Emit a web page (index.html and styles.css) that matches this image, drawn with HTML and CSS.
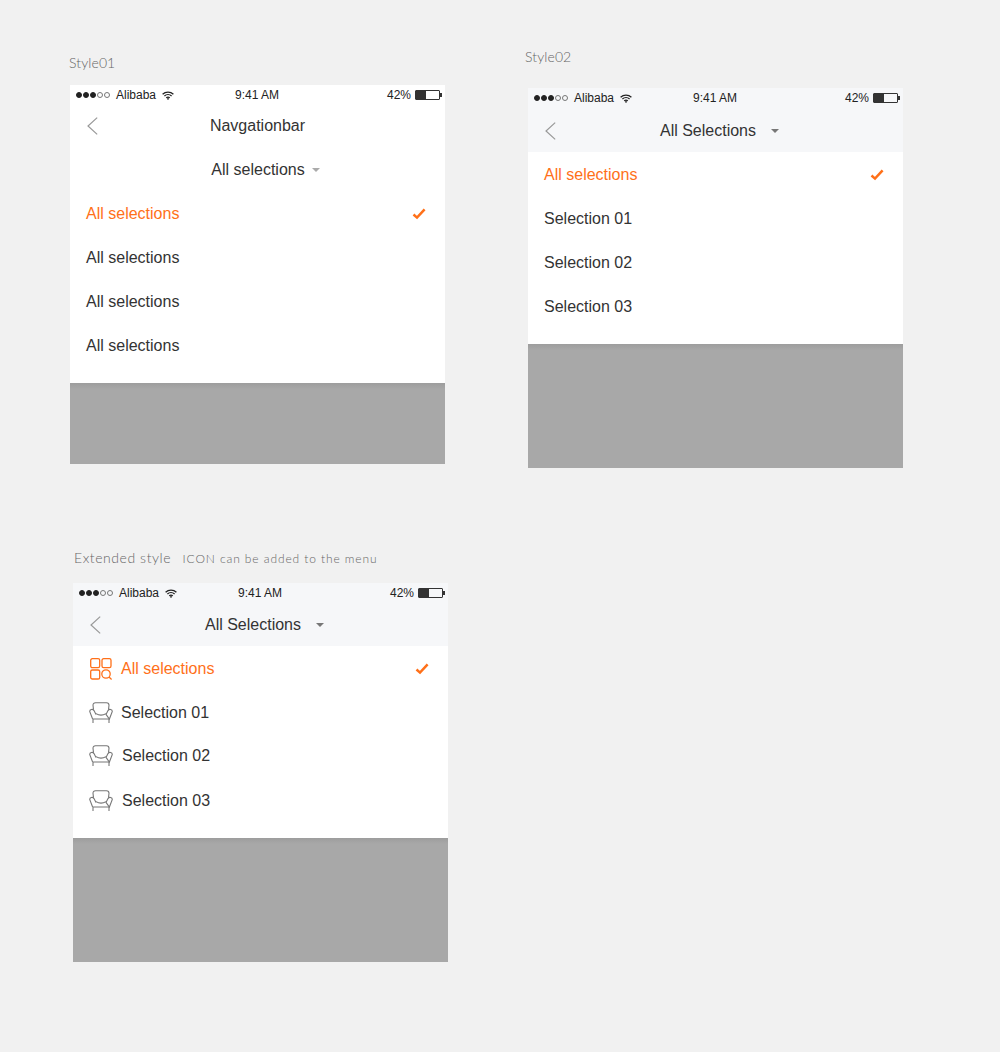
FILE: index.html
```html
<!DOCTYPE html>
<html lang="en">
<head>
    <meta charset="UTF-8">
    <meta name="viewport" content="width=device-width, initial-scale=1.0">
    <title>Dropdown menu styles</title>
    <link rel="stylesheet" href="styles.css">
</head>
<body>

    <!-- shared icons -->
    <svg class="defs" width="0" height="0">
        <symbol id="wifi" viewBox="0 0 12 9">
            <path d="M0.6 3.2C3.6 0.4 8.4 0.4 11.4 3.2M2.4 5C4.4 3.2 7.6 3.2 9.6 5M4.2 6.8C5.2 6 6.8 6 7.8 6.8" fill="none" stroke="#222" stroke-width="1.3"/>
            <path d="M6 9L4.8 7.7C5.5 7.2 6.5 7.2 7.2 7.7Z" fill="#222"/>
        </symbol>
        <symbol id="back" viewBox="0 0 11 18">
            <path d="M10.2 0.6L1 9L10.2 17.4" fill="none" stroke="#999" stroke-width="1.2"/>
        </symbol>
        <symbol id="check" viewBox="0 0 14 12">
            <path d="M1.5 6.5L5 9.6L12.6 1.4" fill="none" stroke="#ff7019" stroke-width="2.5"/>
        </symbol>
        <symbol id="grid" viewBox="0 0 22 22">
            <g fill="none" stroke="#ff7019" stroke-width="1.3">
                <rect x="0.7" y="0.7" width="9" height="9" rx="1.6"/>
                <rect x="12" y="0.7" width="9" height="9" rx="1.6"/>
                <rect x="0.7" y="12" width="9" height="9" rx="1.6"/>
                <circle cx="16" cy="16" r="4.2"/>
                <path d="M19 19L21.6 21.4"/>
            </g>
        </symbol>
        <symbol id="sofa" viewBox="0 0 24 22">
            <g fill="none" stroke="#777" stroke-width="1.1">
                <path d="M4.5 7.6L4 3.2C4 1.6 5 0.7 6.5 0.7H17.5C19 0.7 20 1.6 20 3.2L19.5 7.6"/>
                <path d="M7 11.6C10 13.4 14 13.4 17 11.6"/>
                <path d="M3.6 17L0.7 9.4C0.7 7.4 3.8 6.6 5 8.6L7 12.4M17 12.4L19 8.6C20.2 6.6 23.3 7.4 23.3 9.4L20.4 17Z"/>
                <path d="M3.6 17H20.4M4 17V21M20 17V21"/>
            </g>
        </symbol>
    </svg>

    <div class="top-row">
        <section class="board board-one">
            <h2 class="board-label">Style01</h2>
            <div class="screen">
                <div class="status-bar">
                    <div class="status-left">
                        <span class="signal"><i class="on"></i><i class="on"></i><i class="on"></i><i></i><i></i></span>
                        <span>Alibaba</span>
                        <svg class="wifi"><use href="#wifi"/></svg>
                    </div>
                    <span class="status-time">9:41 AM</span>
                    <div class="status-right">
                        <span>42%</span>
                        <span class="battery"><i></i></span>
                    </div>
                </div>
                <div class="nav">
                    <svg class="back"><use href="#back"/></svg>
                    <span class="nav-title">Navgationbar</span>
                </div>
                <div class="menu">
                    <div class="menu-row filter">All selections <span class="caret"></span></div>
                    <div class="menu-row active">All selections <svg class="check"><use href="#check"/></svg></div>
                    <div class="menu-row">All selections</div>
                    <div class="menu-row">All selections</div>
                    <div class="menu-row">All selections</div>
                </div>
                <div class="mask"></div>
            </div>
        </section>

        <section class="board board-two">
            <h2 class="board-label">Style02</h2>
            <div class="screen">
                <div class="head">
                    <div class="status-bar">
                        <div class="status-left">
                            <span class="signal"><i class="on"></i><i class="on"></i><i class="on"></i><i></i><i></i></span>
                            <span>Alibaba</span>
                            <svg class="wifi"><use href="#wifi"/></svg>
                        </div>
                        <span class="status-time">9:41 AM</span>
                        <div class="status-right">
                            <span>42%</span>
                            <span class="battery"><i></i></span>
                        </div>
                    </div>
                    <div class="nav">
                        <svg class="back"><use href="#back"/></svg>
                        <span class="nav-title with-caret">All Selections <span class="caret dark"></span></span>
                    </div>
                </div>
                <div class="menu">
                    <div class="menu-row active">All selections <svg class="check"><use href="#check"/></svg></div>
                    <div class="menu-row">Selection 01</div>
                    <div class="menu-row">Selection 02</div>
                    <div class="menu-row">Selection 03</div>
                </div>
                <div class="mask tall"></div>
            </div>
        </section>
    </div>

    <section class="board board-three">
        <h2 class="board-label">Extended style <small>ICON can be added to the menu</small></h2>
        <div class="screen">
            <div class="head">
                <div class="status-bar">
                    <div class="status-left">
                        <span class="signal"><i class="on"></i><i class="on"></i><i class="on"></i><i></i><i></i></span>
                        <span>Alibaba</span>
                        <svg class="wifi"><use href="#wifi"/></svg>
                    </div>
                    <span class="status-time">9:41 AM</span>
                    <div class="status-right">
                        <span>42%</span>
                        <span class="battery"><i></i></span>
                    </div>
                </div>
                <div class="nav">
                    <svg class="back"><use href="#back"/></svg>
                    <span class="nav-title with-caret">All Selections <span class="caret dark"></span></span>
                </div>
            </div>
            <div class="menu">
                <div class="menu-row active">
                    <span class="row-label"><svg class="row-icon"><use href="#grid"/></svg>All selections</span>
                    <svg class="check"><use href="#check"/></svg>
                </div>
                <div class="menu-row"><span class="row-label"><svg class="row-icon"><use href="#sofa"/></svg>Selection 01</span></div>
                <div class="menu-row short"><span class="row-label nudge"><svg class="row-icon"><use href="#sofa"/></svg>Selection 02</span></div>
                <div class="menu-row"><span class="row-label nudge"><svg class="row-icon"><use href="#sofa"/></svg>Selection 03</span></div>
            </div>
            <div class="mask tall"></div>
        </div>
    </section>

</body>
</html>
```
FILE: styles.css
```css
* {
    margin: 0;
    padding: 0;
    box-sizing: border-box;
}

body {
    width: 1000px;
    height: 1052px;
    overflow: hidden;
    background-color: #f1f1f1;
    font-family: "Liberation Sans", Arial, sans-serif;
    color: #333;
}

.defs {
    display: block;
    height: 0;
}

.top-row {
    display: flex;
    align-items: flex-start;
    padding-top: 48px;
}

.board-one {
    margin: 6px 0 0 69px;
}

.board-one .board-label {
    margin-bottom: 13px;
}

.board-one .screen {
    margin-left: 1px;
}

.board-one .nav {
    padding-bottom: 2px;
}

.board-one .menu {
    padding-bottom: 15px;
}

.board-two {
    margin-left: 80px;
}

.board-two .board-label {
    margin-bottom: 22px;
}

.board-two .screen {
    margin-left: 3px;
}

.board-two .nav {
    padding-top: 2px;
}

.board-two .menu,
.board-three .menu {
    padding-top: 1px;
    padding-bottom: 15px;
}

.board-three {
    margin: 81px 0 0 74px;
}

.board-three .board-label {
    margin-bottom: 16px;
    letter-spacing: 0.57px;
}

.board-three .screen {
    margin-left: -1px;
}

.board-three .head .nav {
    height: 43px;
}

.board-label {
    height: 18px;
    font-family: Lato, sans-serif;
    font-size: 14px;
    font-weight: 300;
    line-height: 18px;
    letter-spacing: 0.1px;
    color: #666;
}

.board-label small {
    margin-left: 7px;
    font-size: 12px;
    letter-spacing: 0.9px;
}

.screen {
    width: 375px;
    background-color: #fff;
}

.head {
    background-color: #f6f7f9;
}

/* status bar */
.status-bar {
    display: grid;
    grid-template-columns: 1fr auto 1fr;
    align-items: center;
    height: 20px;
    padding: 0 4px 0 6px;
    font-size: 12px;
    color: #222;
}

.status-left {
    display: flex;
    align-items: center;
}

.status-right {
    display: flex;
    align-items: center;
    justify-content: flex-end;
}

.status-time {
    margin-right: 3px;
}

.signal {
    display: flex;
    gap: 1px;
    margin-right: 6px;
}

.signal i {
    width: 6px;
    height: 6px;
    border: 1px solid #777;
    border-radius: 50%;
}

.signal i.on {
    background-color: #222;
    border-color: #222;
}

.wifi {
    width: 12px;
    height: 9px;
    margin-left: 6px;
}

.battery {
    position: relative;
    width: 25px;
    height: 10px;
    margin-left: 4px;
    margin-right: 1px;
    border: 1px solid #333;
    border-radius: 1px;
}

.battery i {
    display: block;
    width: 10px;
    height: 100%;
    background-color: #333;
}

.battery::after {
    content: "";
    position: absolute;
    top: 2px;
    right: -3px;
    width: 2px;
    height: 4px;
    background-color: #333;
}

/* nav */
.nav {
    display: grid;
    grid-template-columns: 1fr auto 1fr;
    align-items: center;
    height: 43px;
    padding-left: 17px;
    padding-right: 17px;
    font-size: 16px;
}

.back {
    width: 11px;
    height: 18px;
}

.nav-title {
    display: flex;
    align-items: center;
    color: #333;
}

.with-caret {
    gap: 15px;
    margin-left: 8px;
}

.head .nav {
    height: 44px;
}

.caret {
    width: 0;
    height: 0;
    border-style: solid;
    border-width: 4.5px 4.5px 0;
    border-color: #aaa transparent transparent;
}

.caret.dark {
    border-top-color: #777;
}

/* menu */
.menu {
    padding-bottom: 16px;
}

.menu-row {
    display: flex;
    align-items: center;
    justify-content: space-between;
    height: 44px;
    padding: 0 19px 0 16px;
    font-size: 16px;
    color: #333;
}

.menu-row.short {
    padding-bottom: 2px;
}

.menu-row.active {
    color: #ff7019;
}

.menu-row.filter {
    justify-content: center;
    gap: 7px;
    padding: 0 0 0 16px;
}

.check {
    width: 14px;
    height: 12px;
}

.row-label {
    display: flex;
    align-items: center;
}

.row-icon {
    width: 24px;
    height: 22px;
    margin-right: 8px;
}

.row-label.nudge .row-icon {
    margin-right: 9px;
}

.mask {
    height: 81px;
    background: linear-gradient(#9d9d9d, #a8a8a8 6px);
}

.mask.tall {
    height: 124px;
}
```
